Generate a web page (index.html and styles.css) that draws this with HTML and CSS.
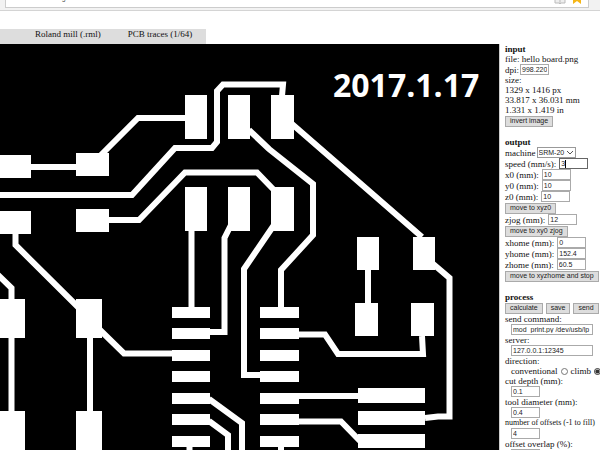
FILE: index.html
```html
<!DOCTYPE html>
<html lang="en">
<head>
<meta charset="utf-8">
<title>mods</title>
<link rel="stylesheet" href="styles.css">
</head>
<body>
<header class="browser">
  <div class="address"><span class="url">mods.cba.mit.org</span>
    <svg class="tools" viewBox="0 0 36 8" aria-hidden="true">
      <path d="M3 0V4H7L8 5L9 4H13V0" fill="#eee" stroke="#bbb"/>
      <path d="M8 0V4" stroke="#bbb"/>
      <path d="M21 0H29L29 5L25 2L21 5Z" fill="#f5b617"/>
    </svg>
  </div>
</header>
<nav class="menu"><a href="#mill">Roland mill (.rml)</a><a href="#traces">PCB traces (1/64)</a></nav>
<main class="work">
  <svg class="board" viewBox="0 44 499 406" role="img" aria-label="PCB traces">
    <rect y="44" width="499" height="406" fill="#000"/>
    <g fill="#fff">
      <path d="M0 155h31v23H0zM76 153h33v23H76zM0 211h31v23H0zM76 209h33v23H76z"/>
      <path d="M0 299h25v39H0zM76 299h26v39H76zM0 411h25v39H0zM76 411h26v39H76z"/>
      <path d="M185 95h22v44h-22zM228 95h22v44h-22zM271 95h23v44h-23zM185 187h22v44h-22zM228 187h22v44h-22zM271 187h23v44h-23z"/>
      <path d="M172 307h38v11h-38zM172 328h38v11h-38zM172 350h38v11h-38zM172 371h38v11h-38zM172 393h38v11h-38zM172 414h38v11h-38zM172 436h38v11h-38z"/>
      <path d="M260 307h39v11h-39zM260 328h39v11h-39zM260 350h39v11h-39zM260 371h39v11h-39zM260 393h39v11h-39zM260 414h39v11h-39zM260 436h39v11h-39z"/>
      <path d="M357 237h22v33h-22zM413 237h22v33h-22zM355 303h23v33h-23zM411 303h23v33h-23z"/>
      <path d="M358 388h67v15h-67zM358 411h67v14h-67zM358 434h67v14h-67z"/>
    </g>
    <g fill="none" stroke="#fff" stroke-width="6">
      <path d="M31 167H76M101 155L138 118H185"/>
      <path d="M0 195H132L175 148H212L217 142V91L223 84.5H283L282 96"/>
      <path d="M109 220H139L185 172.500H257L273 189"/>
      <path d="M15.500 234V245L78 307M100 330L124 353.500H172"/>
      <path d="M-2 275L11.500 288V299M11.500 338V411M90 338V411"/>
      <path d="M249 130L269 149L313 184V235L281 270V307M191.500 231V307"/>
      <path d="M231 225L224.500 238V332H210M274 225L244 269V375H260"/>
      <path d="M292 124L422 237M432 263L449.500 278V416.500H438L425 418M368 270V303"/>
      <path d="M299 334.500H325L338 354H423L422 336"/>
      <path d="M299 396H358M299 421.500H341L360 441"/>
      <path d="M209 399L242 423V450M209 421L228 435V450M189.500 447V450M281 447V450"/>
    </g>
    <text class="date" x="333" y="97">2017.1.17</text>
  </svg>
  <form class="panel">
    <section>
      <h2>input</h2>
      <p>file: hello board.png</p>
      <p class="field"><label for="dpi">dpi:</label><input id="dpi" class="num" value="998.220"></p>
      <p>size:</p>
      <p>1329 x 1416 px</p>
      <p>33.817 x 36.031 mm</p>
      <p>1.331 x 1.419 in</p>
      <p class="actions"><button type="button">invert image</button></p>
    </section>
    <section>
      <h2>output</h2>
      <p class="field"><label for="machine">machine</label><span class="pick"><select id="machine"><option>SRM-20</option></select><svg viewBox="0 0 8 5" aria-hidden="true"><path d="M1 1L4 4L7 1" fill="none" stroke="#555"/></svg></span></p>
      <p class="field wide"><label for="speed">speed (mm/s):</label><input id="speed" class="num focus" value="3"></p>
      <p class="field wide"><label for="x0">x0 (mm):</label><input id="x0" class="num" value="10"></p>
      <p class="field wide"><label for="y0">y0 (mm):</label><input id="y0" class="num" value="10"></p>
      <p class="field wide"><label for="z0">z0 (mm):</label><input id="z0" class="num" value="10"></p>
      <p class="actions"><button type="button">move to xyz0</button></p>
      <p class="field wide"><label for="zjog">zjog (mm):</label><input id="zjog" class="num" value="12"></p>
      <p class="actions"><button type="button">move to xy0 zjog</button></p>
      <p class="field wide"><label for="xh">xhome (mm):</label><input id="xh" class="num" value="0"></p>
      <p class="field wide"><label for="yh">yhome (mm):</label><input id="yh" class="num" value="152.4"></p>
      <p class="field wide"><label for="zh">zhome (mm):</label><input id="zh" class="num" value="60.5"></p>
      <p class="actions"><button type="button">move to xyzhome and stop</button></p>
    </section>
    <section>
      <h2>process</h2>
      <p class="actions"><button type="button">calculate</button><button type="button">save</button><button type="button">send</button></p>
      <p><label for="cmd">send command:</label></p>
      <p class="field indent"><input id="cmd" class="long" value="mod_print.py /dev/usb/lp"></p>
      <p><label for="server">server:</label></p>
      <p class="field indent"><input id="server" class="long" value="127.0.0.1:12345"></p>
      <p>direction:</p>
      <p class="indent radios"><label for="conv">conventional</label><input type="radio" name="dir" id="conv"><label for="climb">climb</label><input type="radio" name="dir" id="climb" checked></p>
      <p><label for="cut">cut depth (mm):</label></p>
      <p class="field indent"><input id="cut" class="num" value="0.1"></p>
      <p><label for="tool">tool diameter (mm):</label></p>
      <p class="field indent"><input id="tool" class="num" value="0.4"></p>
      <p class="compact"><label for="offs">number of offsets (-1 to fill)</label></p>
      <p class="field indent"><input id="offs" class="num" value="4"></p>
      <p><label for="over">offset overlap (%):</label></p>
      <p class="field indent"><input id="over" class="num" value="50"></p>
    </section>
  </form>
</main>
</body>
</html>
```
FILE: styles.css
```css
* { box-sizing: border-box; }
html { overflow: hidden; }
body {
  margin: 0;
  height: 100vh;
  overflow: hidden;
  background: #fff;
  color: #111;
  font: 9px/10px "Liberation Serif", serif;
}
.browser {
  height: 11px;
  padding: 0 11px 0 5px;
  background: #f2f2f2;
  border-bottom: 1px solid #d4d4d4;
}
.address {
  display: flex;
  justify-content: space-between;
  align-items: flex-end;
  height: 8px;
  overflow: hidden;
  background: #fff;
  border: 1px solid #ccc;
  border-top: 0;
}
.url { padding-left: 6px; font: 7px/18px "Liberation Sans", sans-serif; color: #555; }
.tools { width: 36px; height: 8px; }
.menu {
  display: flex;
  gap: 27px;
  width: fit-content;
  height: 15px;
  margin-top: 18px;
  padding: 0 14px 0 35px;
  background: #ddd;
}
.menu a { color: #111; text-decoration: none; }
.work { display: flex; align-items: flex-start; }
.board { flex: 1; min-width: 0; display: block; }
.date { font: bold 32px "Open Sans", "Noto Sans", sans-serif; fill: #fff; }
.panel {
  flex: 0 0 101px;
  min-width: 0;
  padding-left: 5px;
  border-left: 1px solid #ccc;
  white-space: nowrap;
}
section { margin-bottom: 10px; }
h2 { margin: 0; font-size: 9px; line-height: 10px; }
p { margin: 0; height: 10px; }
.field, .actions, .radios { display: flex; align-items: center; }
.field { height: 11px; gap: 1px; }
.wide { gap: 3px; }
.actions { height: 12px; gap: 3px; }
.indent { padding-left: 6px; }
.compact { font-size: 8px; }
.radios { gap: 3px; }
.radios input { flex: none; width: 7px; height: 7px; margin: 0; accent-color: #333; }
input, select, button { font: 7px/8px "Liberation Sans", sans-serif; color: #222; }
.num, .long {
  flex: none;
  height: 11px;
  padding: 0 1px;
  border: 1px solid #aaa;
  background: #fff;
}
.num { width: 29px; }
.long { width: 82px; }
.focus {
  border-color: #666;
  background: linear-gradient(#000, #000) 5px 1px / 1px 8px no-repeat #fff;
}
button {
  flex: none;
  height: 11px;
  padding: 0 4px;
  border: 1px solid #aaa;
  background: #ddd;
}
.pick { position: relative; display: flex; }
select {
  appearance: none;
  width: 39px;
  height: 11px;
  padding: 0 1px;
  border: 1px solid #999;
  background: #fff;
}
.pick svg { position: absolute; right: 2px; top: 3px; width: 8px; height: 5px; pointer-events: none; }
```
